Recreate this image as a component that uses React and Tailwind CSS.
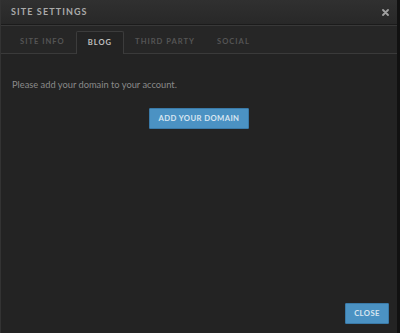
export default function App() {
  return (
    <div className="w-[400px] h-[333px] flex bg-[#111] font-['Lato',sans-serif]">
      <div className="flex-1 flex flex-col bg-[#232323] border-l border-[#333] border-r-[3px] border-r-[#111]">
        <div className="h-[25px] flex items-center justify-between pl-[10px] pr-[8px] bg-gradient-to-b from-[#303030] to-[#282828] border-b border-[#1b1b1b]">
          <span className="text-[9px] font-bold tracking-[1.1px] text-[#aaaaaa]">SITE SETTINGS</span>
          <svg width="7" height="7" viewBox="0 0 7 7" className="mt-[1px]">
            <path d="M1 1 L6 6 M6 1 L1 6" stroke="#a0a0a0" strokeWidth="1.8" strokeLinecap="round" />
          </svg>
        </div>
        <div className="h-[29px] flex items-end pl-[8px] border-t border-[#383838] border-b border-b-[#3a3a3a] bg-[#262626]">
          <div className="h-[22px] px-[11px] flex items-center text-[7.6px] font-bold tracking-[1px] text-[#555]">SITE INFO</div>
          <div className="h-[23px] px-[11px] flex items-center text-[7.6px] font-bold tracking-[1px] text-[#c0c0c0] bg-[#232323] border border-b-0 border-[#3c3c3c] rounded-t-[2px] mb-[-1px]">BLOG</div>
          <div className="h-[22px] px-[11px] flex items-center text-[7.6px] font-bold tracking-[1px] text-[#555]">THIRD PARTY</div>
          <div className="h-[22px] px-[11px] flex items-center text-[7.6px] font-bold tracking-[1px] text-[#555]">SOCIAL</div>
        </div>
        <div className="flex-1 flex flex-col px-[11px] pt-[24px]">
          <p className="text-[9.3px] text-[#8a8a8a]">Please add your domain to your account.</p>
          <div className="flex justify-center mt-[16px]">
            <button className="h-[21px] w-[100px] bg-[#4b92c3] border border-[#3a7aa8] text-[#d8e6f1] text-[7.7px] font-bold tracking-[0.4px] rounded-[1px]">ADD YOUR DOMAIN</button>
          </div>
          <div className="flex-1"></div>
          <div className="flex justify-end pb-[9px]">
            <button className="h-[21px] w-[44px] bg-[#4b92c3] border border-[#3a7aa8] text-[#d8e6f1] text-[7.7px] font-bold tracking-[0.4px] rounded-[1px] mr-[-3px]">CLOSE</button>
          </div>
        </div>
      </div>
    </div>
  );
}
